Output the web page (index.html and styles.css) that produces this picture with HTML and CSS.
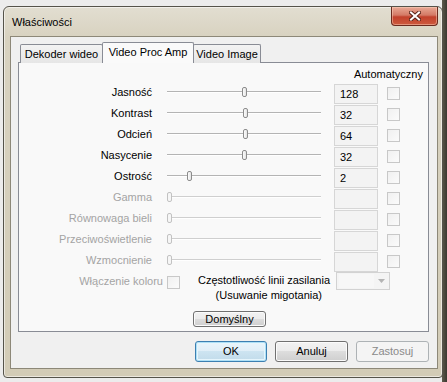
FILE: index.html
```html
<!DOCTYPE html>
<html lang="pl">
<head>
<meta charset="utf-8">
<title>Właściwości</title>
<link rel="stylesheet" href="styles.css">
</head>
<body>
<div class="screen">
  <div class="window">
    <div class="titlebar">
      <span class="title">Właściwości</span>
      <div class="close">
        <svg width="12" height="10" viewBox="0 0 12 10">
          <path d="M2 1.5 L10 8.5 M10 1.5 L2 8.5" stroke="#5a2418" stroke-width="4" stroke-linecap="square" fill="none"/>
          <path d="M2 1.5 L10 8.5 M10 1.5 L2 8.5" stroke="#ffffff" stroke-width="2" stroke-linecap="square" fill="none"/>
        </svg>
      </div>
    </div>
    <div class="client">
      <div class="tabs">
        <div class="tab t1">Dekoder wideo</div>
        <div class="tab t2 active">Video Proc Amp</div>
        <div class="tab t3">Video Image</div>
      </div>
      <div class="panel">
        <div class="head">Automatyczny</div>

        <div class="row">
          <span class="label">Jasność</span>
          <div class="slider"><div class="track"></div><div class="thumb" style="left:50%"></div></div>
          <div class="box">128</div>
          <div class="check"></div>
        </div>
        <div class="row">
          <span class="label">Kontrast</span>
          <div class="slider"><div class="track"></div><div class="thumb" style="left:50.5%"></div></div>
          <div class="box">32</div>
          <div class="check"></div>
        </div>
        <div class="row">
          <span class="label">Odcień</span>
          <div class="slider"><div class="track"></div><div class="thumb" style="left:50.5%"></div></div>
          <div class="box">64</div>
          <div class="check"></div>
        </div>
        <div class="row">
          <span class="label">Nasycenie</span>
          <div class="slider"><div class="track"></div><div class="thumb" style="left:50%"></div></div>
          <div class="box">32</div>
          <div class="check"></div>
        </div>
        <div class="row">
          <span class="label">Ostrość</span>
          <div class="slider"><div class="track"></div><div class="thumb" style="left:14%"></div></div>
          <div class="box">2</div>
          <div class="check"></div>
        </div>
        <div class="row disabled">
          <span class="label">Gamma</span>
          <div class="slider"><div class="track"></div><div class="thumb" style="left:1%"></div></div>
          <div class="box"></div>
          <div class="check"></div>
        </div>
        <div class="row disabled">
          <span class="label">Równowaga bieli</span>
          <div class="slider"><div class="track"></div><div class="thumb" style="left:1%"></div></div>
          <div class="box"></div>
          <div class="check"></div>
        </div>
        <div class="row disabled">
          <span class="label">Przeciwoświetlenie</span>
          <div class="slider"><div class="track"></div><div class="thumb" style="left:1%"></div></div>
          <div class="box"></div>
          <div class="check"></div>
        </div>
        <div class="row disabled">
          <span class="label">Wzmocnienie</span>
          <div class="slider"><div class="track"></div><div class="thumb" style="left:1%"></div></div>
          <div class="box"></div>
          <div class="check"></div>
        </div>

        <div class="bottom">
          <span class="color-label">Włączenie koloru</span>
          <div class="check color-check"></div>
          <div class="freq">Częstotliwość linii zasilania<br>(Usuwanie migotania)</div>
          <div class="combo">
            <div class="combo-field"></div>
            <svg class="combo-arrow" width="7" height="4" viewBox="0 0 7 4"><path d="M0 0 H7 L3.5 4 Z" fill="#b4b4b4"/></svg>
          </div>
        </div>

        <div class="default-row">
          <div class="btn small">Domyślny</div>
        </div>
      </div>
      <div class="buttons">
        <div class="btn default">OK</div>
        <div class="btn">Anuluj</div>
        <div class="btn off">Zastosuj</div>
      </div>
    </div>
  </div>
</div>
</body>
</html>
```

FILE: styles.css
```css
* { box-sizing: border-box; }

html, body {
  margin: 0;
  padding: 0;
}

body {
  width: 447px;
  height: 382px;
  overflow: hidden;
  font-family: "Liberation Sans", Arial, sans-serif;
  font-size: 11px;
  color: #000;
  background: linear-gradient(to right, #ececec 0, #ececec 442px, #5e5a4c 442px, #3a382f 447px);
}

.screen {
  padding: 6px 0 0 3px;
}

.window {
  width: 440px;
  height: 372px;
  border: 1px solid #55534a;
  border-radius: 6px 6px 4px 4px;
  background: linear-gradient(#e2ded1 0, #d8d2c0 30px, #d2cbb6 100%);
  box-shadow: inset 0 0 0 1px rgba(255, 255, 255, 0.55);
  padding: 0 4px 8px 6px;
  display: flex;
  flex-direction: column;
}

.titlebar {
  height: 29px;
  display: flex;
  justify-content: space-between;
  align-items: flex-start;
}

.title {
  margin-top: 9px;
  margin-left: 2px;
  line-height: 13px;
  color: #000;
}

.close {
  width: 47px;
  height: 19px;
  margin-right: 0;
  border: 1px solid #6b2a1e;
  border-top: none;
  border-radius: 0 0 4px 4px;
  background: linear-gradient(#e9a894 0, #d47a66 45%, #c2412c 55%, #cd5a3e 100%);
  box-shadow: inset 0 0 0 1px rgba(255, 220, 200, 0.45);
  display: flex;
  align-items: center;
  justify-content: center;
}

.client {
  flex: 1;
  background: #f0f0f0;
  border: 1px solid #8d8878;
  padding: 5px 8px 0 7px;
  display: flex;
  flex-direction: column;
}

/* Tabs */
.tabs {
  display: flex;
  align-items: flex-end;
  height: 21px;
  margin-left: 2px;
  position: relative;
  z-index: 1;
  margin-bottom: -1px;
}

.tab {
  height: 19px;
  border: 1px solid #898c95;
  border-bottom: none;
  background: linear-gradient(#f3f3f3, #e6e6e6);
  text-align: center;
  line-height: 18px;
  border-radius: 2px 2px 0 0;
}

.t1 { width: 83px; }
.t2 { width: 92px; margin-left: -1px; }
.t3 { width: 68px; margin-left: -1px; }

.tab.active {
  height: 21px;
  background: #fafafa;
  line-height: 19px;
  position: relative;
  z-index: 2;
}

.panel {
  width: 411px;
  height: 270px;
  border: 1px solid #898c95;
  background: #f9f9f9;
  padding: 4px 0 0 0;
}

.head {
  height: 15px;
  line-height: 15px;
  text-align: right;
  padding-right: 5px;
  margin-bottom: 1px;
}

.row {
  height: 21px;
  display: flex;
  align-items: center;
}

.label {
  width: 133px;
  text-align: right;
  line-height: 14px;
  margin-bottom: 4px;
}

.slider {
  width: 154px;
  margin-left: 15px;
  height: 10px;
  position: relative;
  margin-bottom: 4px;
}

.track {
  position: absolute;
  left: 0;
  right: 0;
  top: 4px;
  height: 2px;
  border-top: 1px solid #b4b4b4;
  border-bottom: 1px solid #ffffff;
}

.thumb {
  position: absolute;
  top: 0;
  width: 5px;
  height: 10px;
  margin-left: -2px;
  border: 1px solid #8c8c8c;
  border-radius: 2px;
  background: linear-gradient(to right, #fdfdfd, #e4e4e4);
}

.box {
  width: 44px;
  height: 20px;
  margin-left: 13px;
  border: 1px solid #d6d6d6;
  background: #f3f3f3;
  line-height: 18px;
  padding-left: 5px;
}

.check {
  width: 13px;
  height: 13px;
  margin-left: 9px;
  border: 1px solid #c8c8c8;
  background: linear-gradient(135deg, #f0f0f0, #fbfbfb);
}

.disabled .label { color: #a4a4a4; }
.disabled .thumb { border-color: #c2c2c2; background: #f6f6f6; }
.disabled .track { border-top-color: #cfcfcf; }

/* bottom row */
.bottom {
  display: flex;
  align-items: flex-start;
  height: 31px;
}

.color-label {
  width: 144px;
  text-align: right;
  color: #a4a4a4;
  line-height: 15px;
  margin-top: 2px;
}

.color-check {
  margin-left: 4px;
  margin-top: 4px;
}

.freq {
  width: 124px;
  margin-left: 18px;
  margin-top: 1px;
  text-align: right;
  line-height: 15px;
  white-space: nowrap;
}

.combo {
  width: 54px;
  height: 18px;
  margin-left: 14px;
  border: 1px solid #d2d2d2;
  background: #f4f4f4;
  display: flex;
  align-items: center;
}

.combo-field {
  flex: 1;
  height: 14px;
  margin: 0 2px;
  background: #f7f7f7;
}

.combo-arrow {
  margin: 0 4px 0 2px;
}

.default-row {
  display: flex;
  margin-top: 8px;
  padding-left: 174px;
}

/* buttons */
.btn {
  width: 73px;
  height: 21px;
  border: 1px solid #707070;
  border-radius: 3px;
  background: linear-gradient(#f2f2f2 0, #ebebeb 50%, #dddddd 50%, #cfcfcf 100%);
  box-shadow: inset 0 0 0 1px #fbfbfb;
  text-align: center;
  line-height: 19px;
}

.btn.small {
  height: 16px;
  line-height: 14px;
}

.btn.default {
  width: 72px;
  border-color: #3c7fb1;
  background: linear-gradient(#eaf5fb 0, #dfeef7 50%, #cde4f1 50%, #c1dbea 100%);
  box-shadow: inset 0 0 0 1px #aee0f6, inset 0 0 0 2px #e6f5fc;
}

.btn.off {
  border-color: #adb2b5;
  background: #f4f4f4;
  color: #8a8a8a;
  box-shadow: none;
}

.buttons {
  display: flex;
  justify-content: flex-end;
  gap: 8px;
  margin-top: 9px;
  padding-right: 0;
}
```
